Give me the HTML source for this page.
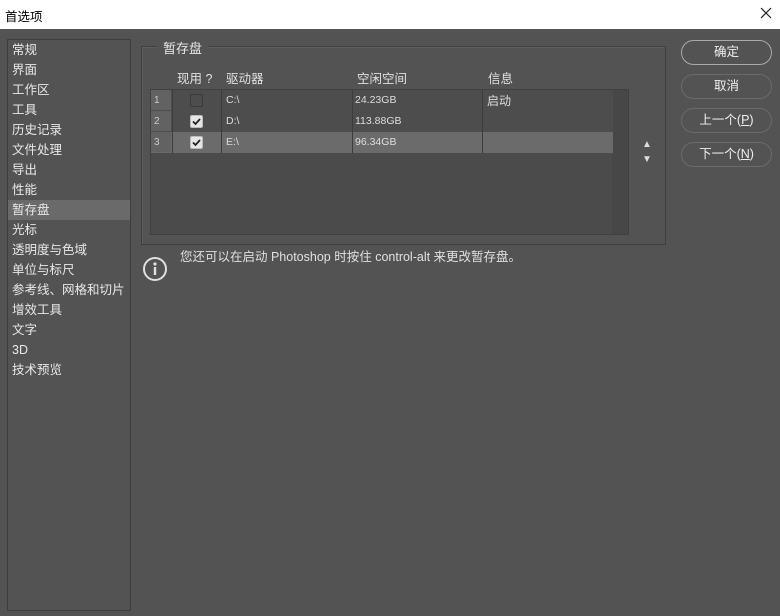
<!DOCTYPE html>
<html><head><meta charset="utf-8"><style>
*{margin:0;padding:0;box-sizing:border-box}
body{width:780px;height:616px;background:#535353;font-family:"Liberation Sans","Noto Sans CJK SC",sans-serif;font-size:12px;color:#e0e0e0;position:relative;overflow:hidden}
.title{position:absolute;left:0;top:0;width:780px;height:29px;background:#fff;color:#000;font-size:12.5px;padding:6px 0 0 5px}
.close{position:absolute;right:8px;top:7px}
.side{position:absolute;left:7px;top:39px;width:124px;height:572px;border:1px solid #3e3e3e;background:#535353}
.side div{height:20px;line-height:20px;padding-left:4px;font-size:12.5px;color:#e8e8e8}
.side .sel{background:#6a6a6a}
.group{position:absolute;left:141px;top:46px;width:525px;height:199px;border:1px solid #3f3f3f;box-shadow:1px 1px 0 #5e5e5e inset}
.gt{position:absolute;left:157px;top:38px;padding:0 6px;background:#535353;font-size:13px;color:#e8e8e8}
.hd{position:absolute;top:68px;font-size:12.5px;color:#e0e0e0}
.tbl{position:absolute;left:150px;top:89px;width:479px;height:146px;background:#4b4b4b;border:1px solid #404040}
.row{position:absolute;left:0;height:21px;width:462px}
.num{position:absolute;left:0;width:20px;height:20px;background:#626262;color:#ccc;font-size:10px;padding:5px 0 0 3px}
.vl{position:absolute;top:0;width:1px;height:63px;background:#3c3c3c}
.cell{position:absolute;top:4px;font-size:10.5px;color:#ddd}
.cb{position:absolute;left:39px;top:4px;width:13px;height:13px;border:1px solid #3a3a3a;border-radius:2px}
.cb.on{background:#e6e6e6;border-color:#bbb}
.btn{position:absolute;left:681px;width:91px;height:25px;border:1.5px solid #6a6a6a;border-radius:13px;text-align:center;line-height:22px;font-size:12.5px;color:#eee}
</style></head><body>
<div class="title">首选项<svg class="close" width="12" height="12" viewBox="0 0 12 12"><path d="M1 1L11 11M11 1L1 11" stroke="#222" stroke-width="1.2"/></svg></div>
<div class="side">
<div style="margin-top:0">常规</div><div>界面</div><div>工作区</div><div>工具</div><div>历史记录</div><div>文件处理</div><div>导出</div><div>性能</div><div class="sel">暂存盘</div><div>光标</div><div>透明度与色域</div><div>单位与标尺</div><div>参考线、网格和切片</div><div>增效工具</div><div>文字</div><div>3D</div><div>技术预览</div>
</div>
<div class="group"></div>
<div class="gt">暂存盘</div>
<div class="hd" style="left:177px">现用 ?</div>
<div class="hd" style="left:226px">驱动器</div>
<div class="hd" style="left:357px">空闲空间</div>
<div class="hd" style="left:488px">信息</div>
<div class="tbl">
<div style="position:absolute;left:461px;top:0;width:16px;height:144px;background:#474747"></div>
<div class="row" style="top:0;background:#4d4d4d"><div class="num">1</div><div class="cb"></div><div class="cell" style="left:75px">C:\</div><div class="cell" style="left:204px">24.23GB</div><div class="cell" style="left:336px;top:2px;font-size:12px">启动</div></div>
<div class="row" style="top:21px;background:#4d4d4d"><div class="num">2</div><div class="cb on"><svg width="11" height="11" viewBox="0 0 11 11"><path d="M2 5.5l2.5 2.5 4.5-5" stroke="#222" stroke-width="1.8" fill="none"/></svg></div><div class="cell" style="left:75px">D:\</div><div class="cell" style="left:204px">113.88GB</div></div>
<div class="row" style="top:42px;background:#6b6b6b"><div class="num">3</div><div class="cb on"><svg width="11" height="11" viewBox="0 0 11 11"><path d="M2 5.5l2.5 2.5 4.5-5" stroke="#222" stroke-width="1.8" fill="none"/></svg></div><div class="cell" style="left:75px">E:\</div><div class="cell" style="left:204px">96.34GB</div></div>
<div class="vl" style="left:21px"></div><div class="vl" style="left:70px"></div><div class="vl" style="left:201px"></div><div class="vl" style="left:331px"></div>
</div>
<div style="position:absolute;left:642px;top:137px;font-size:10px;color:#ddd;line-height:15px">▲<br>▼</div>
<svg style="position:absolute;left:142px;top:256px" width="26" height="26"><circle cx="13" cy="13" r="11" stroke="#e0e0e0" stroke-width="2" fill="none"/><circle cx="13" cy="8" r="1.6" fill="#e0e0e0"/><rect x="11.8" y="11" width="2.4" height="8" fill="#e0e0e0"/></svg>
<div style="position:absolute;left:180px;top:246px;font-size:12.5px;color:#e0e0e0">您还可以在启动 Photoshop 时按住 control-alt 来更改暂存盘。</div>
<div class="btn" style="top:40px;border-color:#aaa">确定</div>
<div class="btn" style="top:74px">取消</div>
<div class="btn" style="top:108px">上一个(<u>P</u>)</div>
<div class="btn" style="top:142px">下一个(<u>N</u>)</div>
</body></html>
